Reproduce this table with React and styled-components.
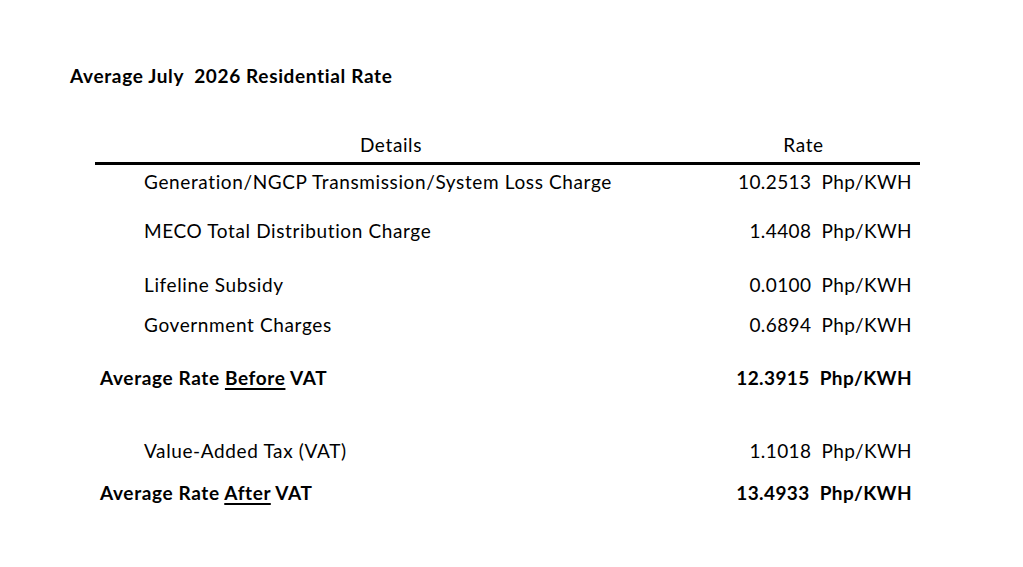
import React from "react";
import styled, { createGlobalStyle } from "styled-components";

const Global = createGlobalStyle`
  html, body { margin: 0; padding: 0; background: #ffffff; }
  body { font-family: Lato, "Open Sans", "Liberation Sans", sans-serif; color: #000; }
`;

const Page = styled.div`
  width: 1023px;
  height: 567px;
  box-sizing: border-box;
  padding-top: 64px;
  display: flex;
  flex-direction: column;
`;

const Title = styled.h1`
  margin: 0 0 0 70px;
  font-size: 19px;
  letter-spacing: 0.65px;
  line-height: 24px;
  font-weight: 700;
  white-space: pre;
`;

const Table = styled.div`
  margin: 45px 0 0 95px;
  width: 825px;
  display: flex;
  flex-direction: column;
`;

const Row = styled.div`
  display: grid;
  grid-template-columns: 592px 233px;
  line-height: 24px;
  font-size: 19px;
  letter-spacing: 0.62px;
  margin-top: ${(p) => p.$gap || 0}px;
  font-weight: ${(p) => (p.$bold ? 700 : 400)};
`;

const HeadCell = styled.div`
  text-align: center;
`;

const Rule = styled.div`
  height: 3px;
  background: #000;
  margin-top: 5px;
`;

const Label = styled.div`
  padding-left: ${(p) => (p.$indent ? 49 : 5)}px;
  white-space: pre;
`;

const Value = styled.div`
  display: flex;
  justify-content: flex-end;
  gap: 10px;
  padding-right: 8px;
  letter-spacing: 0.4px;
`;

const U = styled.span`
  text-decoration: underline;
  text-decoration-thickness: 2px;
  text-underline-offset: 3px;
`;

const rows = [
  { gap: 5, label: "Generation/NGCP Transmission/System Loss Charge", num: "10.2513", indent: true },
  { gap: 25, label: "MECO Total Distribution Charge", num: "1.4408", indent: true },
  { gap: 30, label: "Lifeline Subsidy", num: "0.0100", indent: true },
  { gap: 16, label: "Government Charges", num: "0.6894", indent: true },
  { gap: 29, label: ["Average Rate ", "Before", " VAT"], num: "12.3915", bold: true },
  { gap: 49, label: "Value-Added Tax (VAT)", num: "1.1018", indent: true },
  { gap: 18, label: ["Average Rate ", "After", " VAT"], num: "13.4933", bold: true },
];

export default function App() {
  return (
    <>
      <Global />
      <Page>
        <Title>Average July  2026 Residential Rate</Title>
        <Table>
          <Row>
            <HeadCell>Details</HeadCell>
            <HeadCell>Rate</HeadCell>
          </Row>
          <Rule />
          {rows.map((r, i) => (
            <Row key={i} $gap={r.gap} $bold={r.bold}>
              <Label $indent={r.indent}>
                {Array.isArray(r.label) ? (
                  <>
                    {r.label[0]}
                    <U>{r.label[1]}</U>
                    {r.label[2]}
                  </>
                ) : (
                  r.label
                )}
              </Label>
              <Value>
                <span>{r.num}</span>
                <span>Php/KWH</span>
              </Value>
            </Row>
          ))}
        </Table>
      </Page>
    </>
  );
}
